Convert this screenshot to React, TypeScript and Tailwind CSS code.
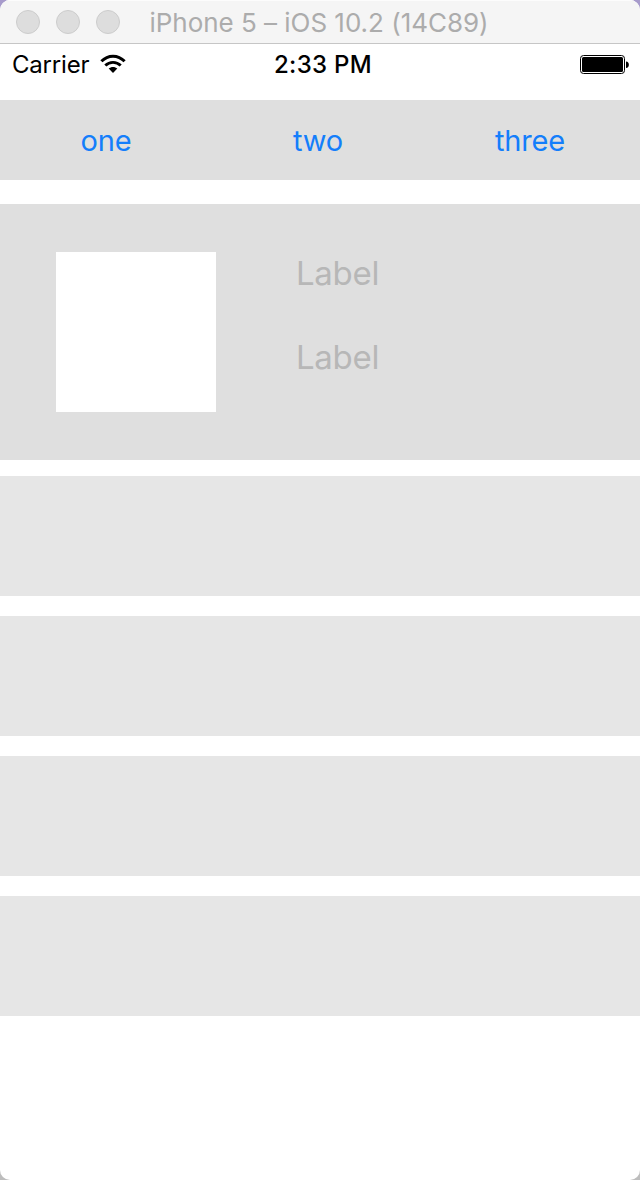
const rows = [0, 1, 2, 3];
const tabs = ["one", "two", "three"];

function TitleBar() {
  return (
    <header className="flex h-11 shrink-0 items-center border-b border-[#c6c6c6] bg-[#f5f5f5] pl-4 shadow-[inset_0_1px_0_#fcfcfc]">
      <div className="flex gap-4">
        {[0, 1, 2].map((i) => (
          <span key={i} className="size-6 rounded-full border border-[#cccccc] bg-[#dddddd]" />
        ))}
      </div>
      <h1 className="ml-[29.5px] mt-[3px] whitespace-nowrap text-[26px] leading-[44px] tracking-[-0.03px] text-[#acacac]">
        iPhone 5 – iOS 10.2 (14C89)
      </h1>
    </header>
  );
}

function StatusBar() {
  return (
    <div className="grid h-14 shrink-0 grid-cols-[1fr_auto_1fr] items-start pl-3 pr-[10px] text-[24px] leading-[42px] text-black">
      <div className="flex">
        <span className="tracking-[-0.2px]">Carrier</span>
        <svg className="ml-[11px] mt-[10px]" width="26" height="20" viewBox="0 0 26 20" fill="none">
          <path d="M1.4 7.3C8 .4 18 .4 24.6 7.3" stroke="#000" strokeWidth="3" />
          <path d="M5.3 11.5C9.7 7.3 16.3 7.3 20.7 11.5" stroke="#000" strokeWidth="2.9" />
          <path d="M8.7 14.6C11 12.3 15 12.3 17.3 14.6L13 18.9Z" fill="#000" />
        </svg>
      </div>
      <span className="ml-1 font-medium tracking-[0.3px]">2:33 PM</span>
      <svg className="mt-[10px] justify-self-end" width="50" height="20" viewBox="0 0 50 20">
        <rect x=".5" y="1.5" width="44" height="18" rx="3" fill="#fff" stroke="#000" />
        <rect x="2" y="3" width="41" height="15" rx="1.5" />
        <path d="M46 7.5C49.8 7.7 49.8 13.8 46 14Z" />
      </svg>
    </div>
  );
}

export default function App() {
  return (
    <div className="h-[1180px] w-[640px] bg-[linear-gradient(#a79bcb_50%,#bdbdbd_50%)] font-['Inter','Liberation_Sans',sans-serif]">
      <main className="flex h-full flex-col overflow-hidden rounded-[10px] bg-white">
        <TitleBar />
        <StatusBar />
        <nav className="grid h-20 shrink-0 grid-cols-[212px_212px_212px] bg-[#dfdfdf]">
          {tabs.map((tab) => (
            <button key={tab} className="pt-px text-[29px] leading-[80px] tracking-[-0.2px] text-[#147efb]">
              {tab}
            </button>
          ))}
        </nav>
        <section className="mt-6 flex h-64 shrink-0 bg-[#dfdfdf] pl-14 pt-12">
          <div className="size-40 bg-white" />
          <div className="ml-20 flex flex-col gap-[42px] text-[33px] leading-[43px] text-[#b7b7b7] *:h-[42px] *:tracking-[-0.3px]">
            <span>Label</span>
            <span>Label</span>
          </div>
        </section>
        <div className="mt-4 flex flex-col gap-5">
          {rows.map((row) => (
            <div key={row} className="h-[120px] bg-[#e6e6e6]" />
          ))}
        </div>
      </main>
    </div>
  );
}
